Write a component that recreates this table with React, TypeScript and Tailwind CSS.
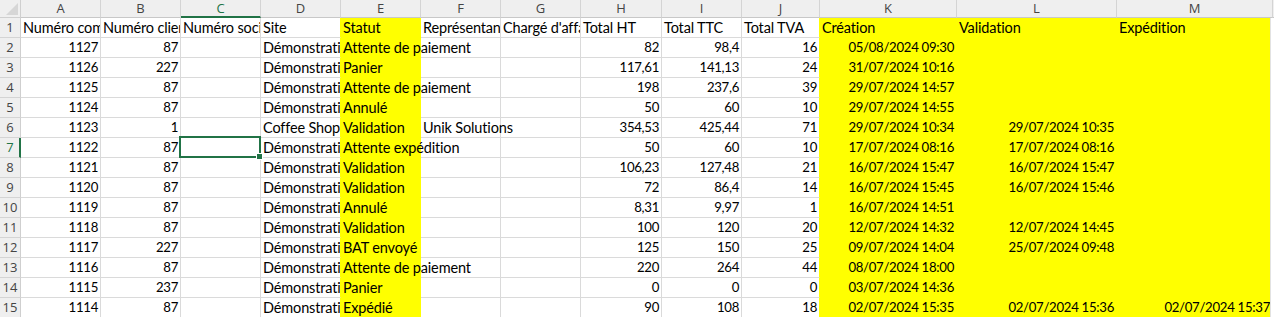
import React from "react";

type Col = { key: string; w: string; yellow: boolean };

const cols: Col[] = [
  { key: "A", w: "w-[80px]", yellow: false },
  { key: "B", w: "w-[80px]", yellow: false },
  { key: "C", w: "w-[80px]", yellow: false },
  { key: "D", w: "w-[80px]", yellow: false },
  { key: "E", w: "w-[80px]", yellow: true },
  { key: "F", w: "w-[80px]", yellow: false },
  { key: "G", w: "w-[80px]", yellow: false },
  { key: "H", w: "w-[81px]", yellow: false },
  { key: "I", w: "w-[80px]", yellow: false },
  { key: "J", w: "w-[78px]", yellow: false },
  { key: "K", w: "w-[137px]", yellow: true },
  { key: "L", w: "w-[160px]", yellow: true },
  { key: "M", w: "w-[156px]", yellow: true },
];

const header = [
  "Numéro commande",
  "Numéro client",
  "Numéro société",
  "Site",
  "Statut",
  "Représentant",
  "Chargé d'affaires",
  "Total HT",
  "Total TTC",
  "Total TVA",
  "Création",
  "Validation",
  "Expédition",
];

const D = "Démonstration";
const data: string[][] = [
  ["1127", "87", "", D, "Attente de paiement", "", "", "82", "98,4", "16", "05/08/2024 09:30", "", ""],
  ["1126", "227", "", D, "Panier", "", "", "117,61", "141,13", "24", "31/07/2024 10:16", "", ""],
  ["1125", "87", "", D, "Attente de paiement", "", "", "198", "237,6", "39", "29/07/2024 14:57", "", ""],
  ["1124", "87", "", D, "Annulé", "", "", "50", "60", "10", "29/07/2024 14:55", "", ""],
  ["1123", "1", "", "Coffee Shop", "Validation", "Unik Solutions", "", "354,53", "425,44", "71", "29/07/2024 10:34", "29/07/2024 10:35", ""],
  ["1122", "87", "", D, "Attente expédition", "", "", "50", "60", "10", "17/07/2024 08:16", "17/07/2024 08:16", ""],
  ["1121", "87", "", D, "Validation", "", "", "106,23", "127,48", "21", "16/07/2024 15:47", "16/07/2024 15:47", ""],
  ["1120", "87", "", D, "Validation", "", "", "72", "86,4", "14", "16/07/2024 15:45", "16/07/2024 15:46", ""],
  ["1119", "87", "", D, "Annulé", "", "", "8,31", "9,97", "1", "16/07/2024 14:51", "", ""],
  ["1118", "87", "", D, "Validation", "", "", "100", "120", "20", "12/07/2024 14:32", "12/07/2024 14:45", ""],
  ["1117", "227", "", D, "BAT envoyé", "", "", "125", "150", "25", "09/07/2024 14:04", "25/07/2024 09:48", ""],
  ["1116", "87", "", D, "Attente de paiement", "", "", "220", "264", "44", "08/07/2024 18:00", "", ""],
  ["1115", "237", "", D, "Panier", "", "", "0", "0", "0", "03/07/2024 14:36", "", ""],
  ["1114", "87", "", D, "Expédié", "", "", "90", "108", "18", "02/07/2024 15:35", "02/07/2024 15:36", "02/07/2024 15:37"],
];

const isNum = (s: string) => /^[0-9][0-9,/: ]*$/.test(s);

function Cell({
  text,
  col,
  nextCol,
  nextEmpty,
  selected,
}: {
  text: string;
  col: Col;
  nextCol?: Col;
  nextEmpty: boolean;
  selected?: boolean;
}) {
  const right = isNum(text);
  const bg = col.yellow ? "bg-[#ffff00]" : "bg-white";
  const br = col.yellow || (nextCol && nextCol.yellow) ? "border-r-[#ffff00]" : "border-r-[#dadada]";
  const bb = col.yellow ? "border-b-[#ffff00]" : "border-b-[#dadada]";
  const clip = right || !nextEmpty ? "overflow-hidden" : "overflow-visible";
  return (
    <div className={`relative shrink-0 h-[20px] border-r border-b ${col.w} ${bg} ${br} ${bb}`}>
      <div
        className={`h-full w-full flex ${clip} ${
          right ? "justify-end pr-[2px]" : "justify-start pl-[2px]"
        }`}
      >
        {text !== "" &&
          (right ? (
            <span className="relative z-10 whitespace-nowrap leading-[19px] text-[13.2px] tracking-[-0.3px]">
              {text}
            </span>
          ) : (
            <span className="relative z-10 whitespace-nowrap leading-[19px] tracking-[-0.15px]">{text}</span>
          ))}
      </div>
      {selected && (
        <div className="absolute -left-[2px] -top-[2px] -right-[1px] -bottom-[1px] z-20 border-2 border-[#217346]">
          <div className="absolute -right-[4px] -bottom-[4px] w-[7px] h-[7px] bg-[#217346] border border-white" />
        </div>
      )}
    </div>
  );
}

function Row({ n, values }: { n: number; values: string[] }) {
  const sel = n === 7;
  return (
    <div className="flex">
      <div
        className={`shrink-0 w-[21px] h-[20px] bg-[#efefef] border-b border-b-[#d4d4d4] flex justify-center text-[13px] leading-[19px] ${
          sel ? "border-r-2 border-r-[#217346] text-[#217346] pl-[1px]" : "border-r border-r-[#cfcfcf] text-[#444]"
        }`}
        style={{ fontFamily: "'Open Sans', sans-serif" }}
      >
        {n}
      </div>
      {cols.map((c, i) => (
        <Cell
          key={c.key}
          text={values[i]}
          col={c}
          nextCol={cols[i + 1]}
          nextEmpty={i + 1 >= values.length || values[i + 1] === ""}
          selected={sel && c.key === "C"}
        />
      ))}
      <div className="flex-1 h-[20px] bg-white" />
    </div>
  );
}

export default function App() {
  return (
    <div
      className="relative w-[1274px] h-[317px] overflow-hidden bg-white text-black text-[14.5px]"
      style={{ fontFamily: "Lato, 'Liberation Sans', sans-serif" }}
    >
      <div className="flex">
        <div className="relative shrink-0 w-[21px] h-[18px] bg-[#efefef] border-r border-b border-[#cfcfcf]">
          <svg className="absolute right-[2px] bottom-[2px]" width="12" height="12" viewBox="0 0 12 12">
            <polygon points="12,0 12,12 0,12" fill="#d6d6d6" />
          </svg>
        </div>
        {cols.map((c) => {
          const sel = c.key === "C";
          return (
            <div
              key={c.key}
              className={`shrink-0 ${c.w} h-[18px] bg-[#efefef] border-r border-r-[#d4d4d4] flex justify-center text-[13px] leading-[17px] ${
                sel ? "border-b-2 border-b-[#217346] text-[#217346] bg-[#e6e6e6]" : "border-b border-b-[#c8c8c8] text-[#444]"
              }`}
              style={{ fontFamily: "'Open Sans', sans-serif" }}
            >
              {c.key}
            </div>
          );
        })}
        <div className="flex-1 h-[18px] bg-[#efefef] border-b border-[#c8c8c8]" />
      </div>
      <Row n={1} values={header} />
      {data.map((r, i) => (
        <Row key={i} n={i + 2} values={r} />
      ))}
      <div className="absolute right-0 top-[18px] bottom-0 w-[4px] bg-white border-l border-[#e2e2e2] z-30" />
    </div>
  );
}
